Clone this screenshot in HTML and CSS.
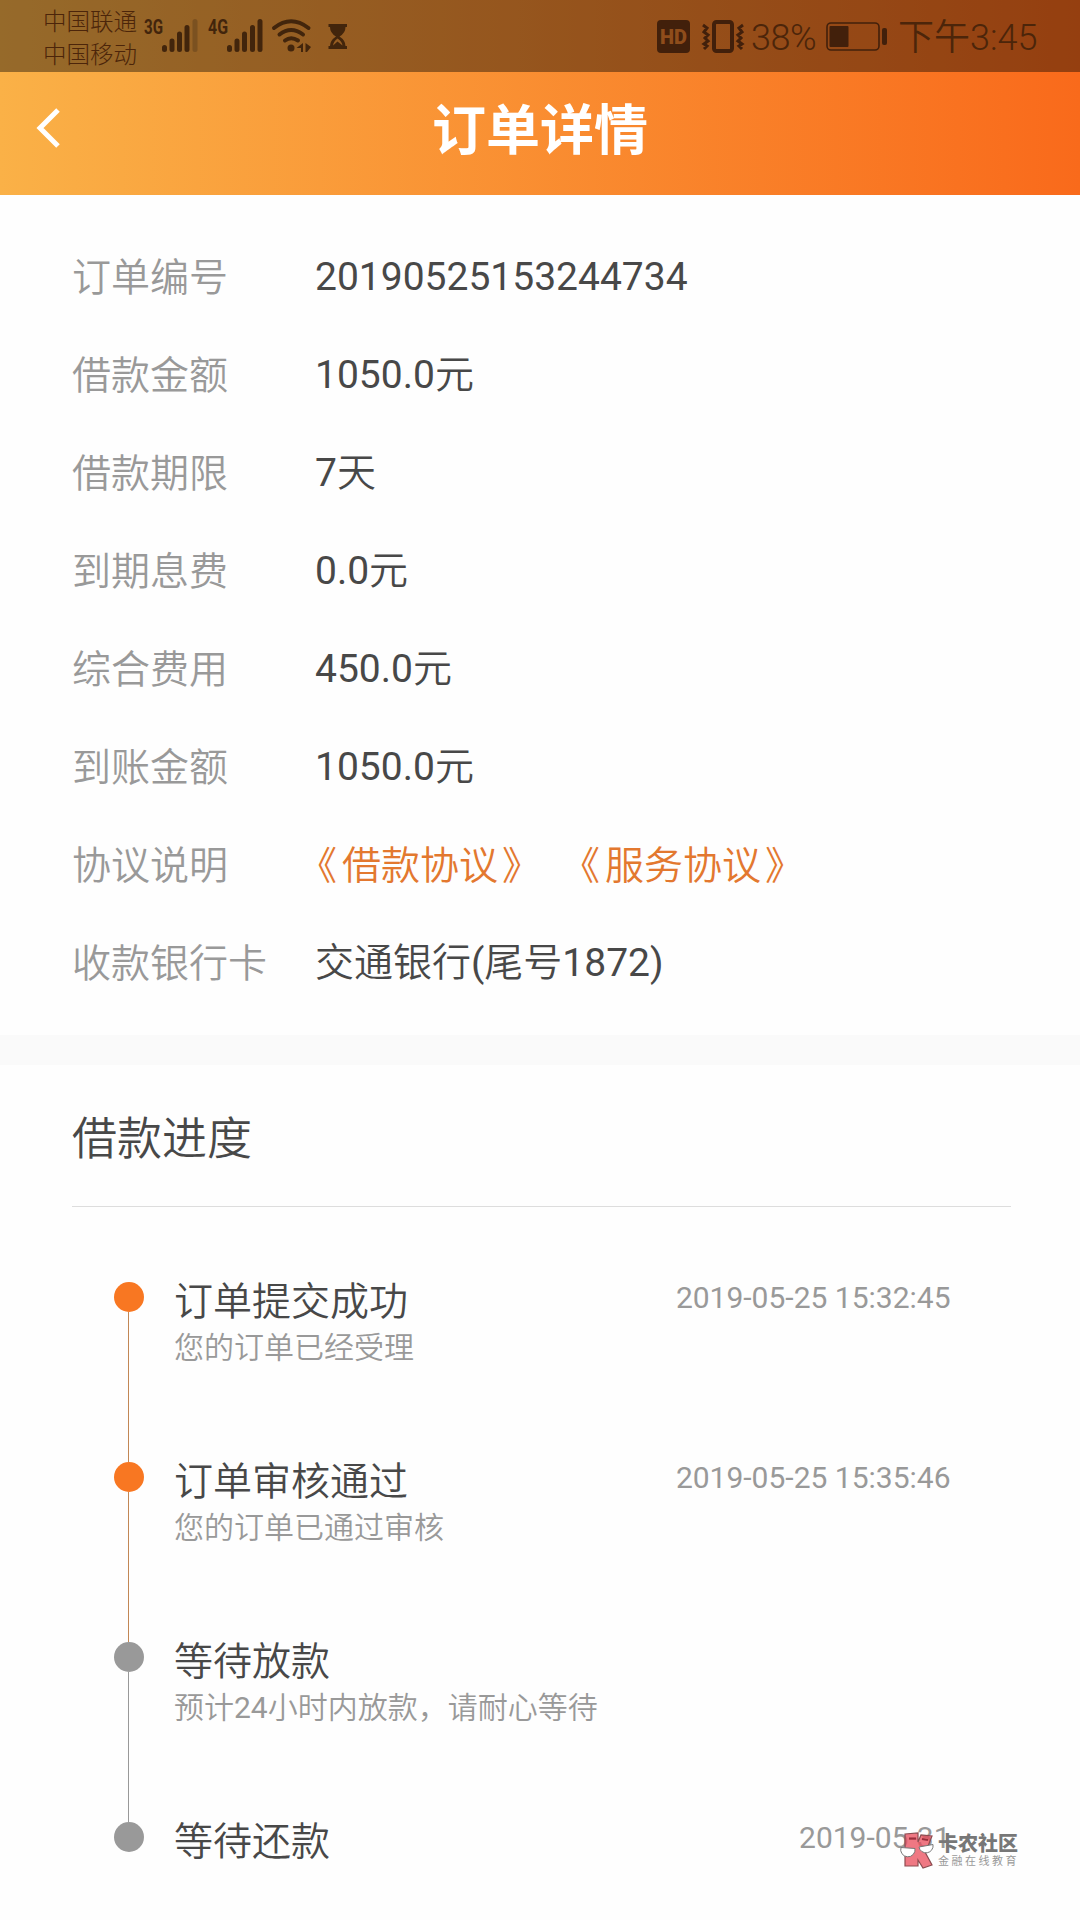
FILE: index.html
```html
<!DOCTYPE html>
<html lang="zh-CN">
<head>
<meta charset="utf-8">
<title>订单详情</title>
<link rel="stylesheet" href="styles.css">
</head>
<body>
<header class="top">
  <div class="status">
    <div class="carriers"><span>中国联通</span><span>中国移动</span></div>
    <svg class="status-left" width="210" height="72" viewBox="140 0 210 72">
      <g class="net"><text x="144" y="34" textLength="19" lengthAdjust="spacingAndGlyphs">3G</text><text x="208" y="34" textLength="20" lengthAdjust="spacingAndGlyphs">4G</text></g>
      <g stroke="#42250c" stroke-width="5" stroke-linecap="round" fill="none">
        <path d="M164.500 47.500V49.500M172 41V49.500M179.500 34V49.500M187 27.500V49.500"/>
        <path d="M195 21.500V49.500" stroke="#7b5120"/>
        <path d="M229.500 47.500V49.500M237 41V49.500M244.500 34V49.500M252.500 27.500V49.500M260 21.500V49.500"/>
        <path d="M274 28Q291 14.500 308.500 28M279.500 34.500Q291 25.500 303 34.500M285 40.500Q291 36 298 40.500" stroke-width="4"/>
      </g>
      <circle cx="291" cy="48" r="3.500" fill="#42250c"/>
      <path d="M296.500 48l6.500-5v9h-2v-4zM305.500 43l5.500 4-4 5h-1.500z" fill="#42250c"/>
      <path d="M328.500 24H347v3h-1.500q0 6-6 9.500 6 4 6 9.500H347v3H328.500v-3h1.500q0-5.500 6-9.500-6-3.500-6-9.500h-1.500zM337.500 38.500q-4 3-4.500 7l4.500-4 5 4q-.5-4-5-7z" fill="#42250c" fill-rule="evenodd"/>
    </svg>
    <svg class="status-mid" width="96" height="72" viewBox="655 0 96 72">
      <rect x="657" y="20" width="33" height="33" rx="4" fill="#42200b"/>
      <text class="hd" x="660" y="44" textLength="27" lengthAdjust="spacingAndGlyphs">HD</text>
      <rect x="714" y="22" width="18" height="29" rx="2.500" fill="none" stroke="#42200b" stroke-width="4"/>
      <path d="M703 25l4 3-3 4 4 3-3 3 3 3-4 3 3 2-3 3M743 25l-4 3 3 4-4 3 3 3-3 3 4 3-3 2 3 3" fill="none" stroke="#42200b" stroke-width="3"/>
    </svg>
    <span class="battery-text">38%</span>
    <svg class="battery" width="64" height="72" viewBox="825 0 64 72">
      <rect x="827" y="23" width="52" height="27" rx="4" fill="none" stroke="#42200b" stroke-width="1.600"/>
      <rect x="829.500" y="26" width="19" height="21" rx="1" fill="#42200b"/>
      <rect x="882" y="28" width="5" height="17" rx="2" fill="#42200b"/>
    </svg>
    <span class="clock">下午3:45</span>
  </div>
  <div class="nav">
    <svg class="back" width="28" height="44" viewBox="0 0 28 44"><path d="M24 4L6 22L24 40" fill="none" stroke="#fff" stroke-width="5"/></svg>
    <h1>订单详情</h1>
  </div>
</header>
<main>
  <dl class="info">
    <div><dt>订单编号</dt><dd>20190525153244734</dd></div>
    <div><dt>借款金额</dt><dd>1050.0元</dd></div>
    <div><dt>借款期限</dt><dd>7天</dd></div>
    <div><dt>到期息费</dt><dd>0.0元</dd></div>
    <div><dt>综合费用</dt><dd>450.0元</dd></div>
    <div><dt>到账金额</dt><dd>1050.0元</dd></div>
    <div><dt>协议说明</dt><dd class="links"><a><span class="open">《</span>借款协议<span class="close">》</span></a><a><span class="open">《</span>服务协议<span class="close">》</span></a></dd></div>
    <div><dt>收款银行卡</dt><dd>交通银行(尾号1872)</dd></div>
  </dl>
  <section class="progress">
    <h2>借款进度</h2>
    <ol class="steps">
      <li class="done"><div class="rail"></div><div class="body"><h3>订单提交成功</h3><p>您的订单已经受理</p></div><time>2019-05-25 15:32:45</time></li>
      <li class="done"><div class="rail"></div><div class="body"><h3>订单审核通过</h3><p>您的订单已通过审核</p></div><time>2019-05-25 15:35:46</time></li>
      <li><div class="rail"></div><div class="body"><h3>等待放款</h3><p>预计24小时内放款，请耐心等待</p></div></li>
      <li><div class="rail"></div><div class="body"><h3>等待还款</h3></div><time>2019-05-31</time></li>
    </ol>
  </section>
</main>
<div class="watermark">
  <svg width="36" height="38" viewBox="0 0 36 38">
    <path d="M6 2L19 1V10L22 3L33 4L28 17L26 20L33 33L24 36L19 28V34H6Z" fill="#e94b5a" fill-opacity=".75" stroke="#8c4c50" stroke-width="1.200"/>
    <path d="M10 6.500h7M23 7l6 1" stroke="#9b2f3c" stroke-width="2"/>
    <path d="M2 15.500L16 16.500A7.200 7.200 0 1 1 2 15.500ZM20 15L34 12.500A7 7 0 1 1 20 15Z" fill="#fff" stroke="#777"/>
  </svg>
  <div class="brand"><strong>卡农社区</strong><span>金融在线教育</span></div>
</div>
</body>
</html>
```
FILE: styles.css
```css
* { box-sizing: border-box; margin: 0; padding: 0; }
body {
  width: 1080px;
  height: 1920px;
  overflow: hidden;
  position: relative;
  background: #fefefe;
  color: #484848;
  font-family: Roboto, "Noto Sans CJK SC DemiLight", "Noto Sans CJK SC", sans-serif;
  font-size: 39px;
}
h2, h3, dt, dd, p { font-weight: 400; }
.carriers, .clock { font-family: Roboto, "Noto Sans CJK SC", sans-serif; font-weight: 300; }
.top { height: 195px; background: linear-gradient(90deg, #fab147, #f96a1b); }
.status {
  height: 72px;
  display: flex;
  align-items: center;
  padding-left: 43px;
  background: rgba(0, 0, 0, .4);
  color: #4c250a;
}
.carriers { display: flex; flex-direction: column; width: 97px; padding-top: 5px; font-size: 23.500px; line-height: 33px; white-space: nowrap; }
.net text { font: 700 21px Roboto, sans-serif; fill: #42250c; }
.hd { font: 900 20px Roboto, sans-serif; fill: #8f4d1b; }
.status-mid { margin-left: 305px; }
.battery-text { width: 74px; padding-top: 4px; font-size: 36px; font-weight: 350; letter-spacing: -.5px; white-space: nowrap; }
.clock { margin-left: 9px; padding-top: 4px; font-size: 36px; font-weight: 350; line-height: 68px; white-space: nowrap; }
.nav { height: 123px; display: flex; align-items: center; padding: 0 34px; }
.back { margin-top: -12px; }
.nav h1 { flex: 1; margin: -14px 28px 0 0; text-align: center; color: #fff; font: 700 54px "Noto Sans CJK SC", sans-serif; }
.info { height: 840px; padding: 33px 72px 0; }
.info div { display: flex; height: 98px; line-height: 98px; white-space: nowrap; }
.info dt { width: 243px; padding-top: 1px; color: #999; }
.info .links { display: flex; gap: 37px; padding-top: 1px; color: #e3782f; }
.open { margin: 0 5px 0 -17px; }
.close { margin-left: 4px; }
.progress { border-top: 30px solid #fafafa; padding: 0 69px 0 72px; }
.progress h2 { height: 142px; border-bottom: 1px solid #ddd; font-size: 45px; line-height: 149px; }
.steps { list-style: none; padding: 75px 60px 0 42px; }
.steps li { display: flex; height: 180px; color: #999; }
.rail { width: 60px; display: flex; flex-direction: column; }
.rail::before { content: ""; width: 30px; height: 30px; flex: none; border-radius: 50%; background: #999; }
.rail::after { content: ""; flex: 1; width: 1px; margin-left: 14px; background: #999; }
.done .rail::before { background: #f87722; }
.done .rail::after { background: #c28755; }
.steps li:last-child .rail::after { display: none; }
.body { flex: 1; }
.body h3 { height: 43px; font-size: 39px; line-height: 40px; color: #484848; }
.body p { font-size: 30px; line-height: 45px; }
.steps time { margin-right: .5px; font-size: 30px; line-height: 32px; white-space: nowrap; }
.watermark { position: absolute; left: 899px; top: 1832px; display: flex; gap: 3px; color: #777; }
.brand { display: flex; flex-direction: column; font-family: "Noto Sans CJK SC", sans-serif; white-space: nowrap; }
.brand strong { font-size: 20px; font-weight: 900; line-height: 22px; }
.brand span { font-size: 11px; letter-spacing: 2.500px; line-height: 12px; color: #999; }
```
